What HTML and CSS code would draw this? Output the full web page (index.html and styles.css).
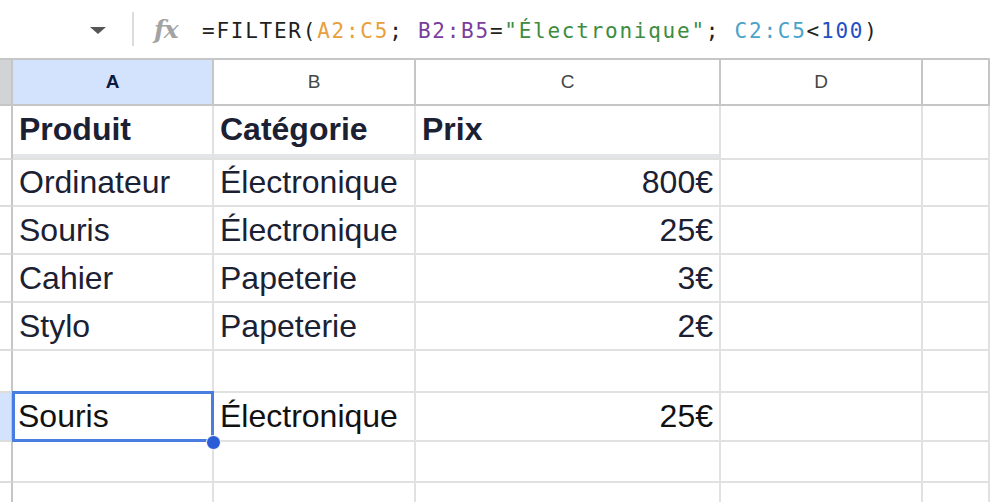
FILE: index.html
```html
<!DOCTYPE html>
<html lang="fr">
<head>
<meta charset="utf-8">
<title>Feuille</title>
<link rel="stylesheet" href="styles.css">
</head>
<body>
<div class="app">
  <div class="fbar">
    <span class="caret"></span>
    <span class="sep"></span>
    <span class="fx">fx</span>
    <div class="formula">=FILTER(<span class="r1">A2:C5</span>; <span class="r2">B2:B5</span>=<span class="str">"Électronique"</span>; <span class="r3">C2:C5</span>&lt;<span class="n">100</span>)</div>
  </div>
  <div class="grid">
    <div class="g corner"></div>
    <div class="c h sel">A</div>
    <div class="c h">B</div>
    <div class="c h">C</div>
    <div class="c h">D</div>
    <div class="c h"></div>

    <div class="g"></div>
    <div class="c b band">Produit</div>
    <div class="c b band">Catégorie</div>
    <div class="c b band">Prix</div>
    <div class="c"></div>
    <div class="c"></div>

    <div class="g"></div>
    <div class="c">Ordinateur</div>
    <div class="c">Électronique</div>
    <div class="c num">800€</div>
    <div class="c"></div>
    <div class="c"></div>

    <div class="g"></div>
    <div class="c">Souris</div>
    <div class="c">Électronique</div>
    <div class="c num">25€</div>
    <div class="c"></div>
    <div class="c"></div>

    <div class="g"></div>
    <div class="c">Cahier</div>
    <div class="c">Papeterie</div>
    <div class="c num">3€</div>
    <div class="c"></div>
    <div class="c"></div>

    <div class="g"></div>
    <div class="c">Stylo</div>
    <div class="c">Papeterie</div>
    <div class="c num">2€</div>
    <div class="c"></div>
    <div class="c"></div>

    <div class="g"></div>
    <div class="c"></div>
    <div class="c"></div>
    <div class="c"></div>
    <div class="c"></div>
    <div class="c"></div>

    <div class="g gsel"></div>
    <div class="c res active">Souris<span class="selbox"></span><span class="handle"></span></div>
    <div class="c res">Électronique</div>
    <div class="c res num">25€</div>
    <div class="c"></div>
    <div class="c"></div>

    <div class="g"></div>
    <div class="c"></div>
    <div class="c"></div>
    <div class="c"></div>
    <div class="c"></div>
    <div class="c"></div>

    <div class="g"></div>
    <div class="c"></div>
    <div class="c"></div>
    <div class="c"></div>
    <div class="c"></div>
    <div class="c"></div>
  </div>
</div>
</body>
</html>
```

FILE: styles.css
```css
* { box-sizing: border-box; }
html, body {
  margin: 0;
  padding: 0;
  background: #ffffff;
  overflow: hidden;
}
.app {
  width: 990px;
  height: 502px;
  overflow: hidden;
  font-family: "Liberation Sans", Arial, sans-serif;
}
.fbar {
  height: 60px;
  display: flex;
  align-items: center;
  padding-left: 90px;
  border-bottom: 2px solid #c4c7c5;
  background: #fff;
}
.caret {
  width: 0;
  height: 0;
  border-left: 8px solid transparent;
  border-right: 8px solid transparent;
  border-top: 7px solid #555555;
  margin-right: 26px;
  margin-top: 2px;
}
.sep {
  width: 2px;
  height: 34px;
  background: #dcdcdc;
  margin-right: 20px;
}
.fx {
  font-family: "DejaVu Serif", "Liberation Serif", serif;
  font-style: italic;
  font-weight: bold;
  font-size: 25px;
  color: #a3a3a3;
  width: 48px;
  letter-spacing: -1px;
  margin-top: 0px;
}
.formula {
  font-family: "DejaVu Sans Mono", "Liberation Mono", monospace;
  font-size: 21px;
  letter-spacing: 1.75px;
  color: #1f1f1f;
  white-space: nowrap;
  margin-top: 4px;
}
.r1 { color: #e8a03a; }
.r2 { color: #7a3e9d; }
.str { color: #3d8c40; }
.r3 { color: #4aa3c8; }
.n { color: #2550c4; }

.grid {
  display: grid;
  grid-template-columns: 13px 201px 202px 305px 202px 67px;
  grid-template-rows: 46px 54px 47px 48px 48px 48px 42px 49px 41px 48px;
}
.g {
  border-right: 2px solid #c4c7c5;
  border-bottom: 2px solid #dcdcdc;
  background: #fff;
}
.corner {
  background: #d2d3d5;
  border-bottom-color: #c4c7c5;
}
.gsel { background: #d3e3fd; }
.c {
  border-right: 2px solid #e1e1e1;
  border-bottom: 2px solid #e1e1e1;
  display: flex;
  align-items: center;
  padding: 0 6px 0 6px;
  font-size: 32px;
  color: #1b2133;
  white-space: nowrap;
  position: relative;
  background: #fff;
}
.h {
  justify-content: center;
  font-size: 19px;
  color: #444746;
  border-right-color: #c4c7c5;
  border-bottom-color: #c4c7c5;
}
.h.sel {
  background: #d3e3fd;
  color: #0b1a3f;
  font-weight: bold;
}
.b { font-weight: bold; }
.band { box-shadow: inset 0 -4px 0 #e3e5e8; padding-bottom: 6px; }
.num { justify-content: flex-end; }
.res { color: #111111; }
.active { padding-left: 5px; }
.selbox {
  position: absolute;
  left: -1px;
  top: -2px;
  width: 202px;
  height: 51px;
  border: 3px solid #4a7de0;
  pointer-events: none;
}
.handle {
  position: absolute;
  left: 193px;
  top: 42px;
  width: 15px;
  height: 15px;
  border-radius: 50%;
  background: #2b5dd6;
  border: 1px solid #ffffff;
  z-index: 2;
}
```
